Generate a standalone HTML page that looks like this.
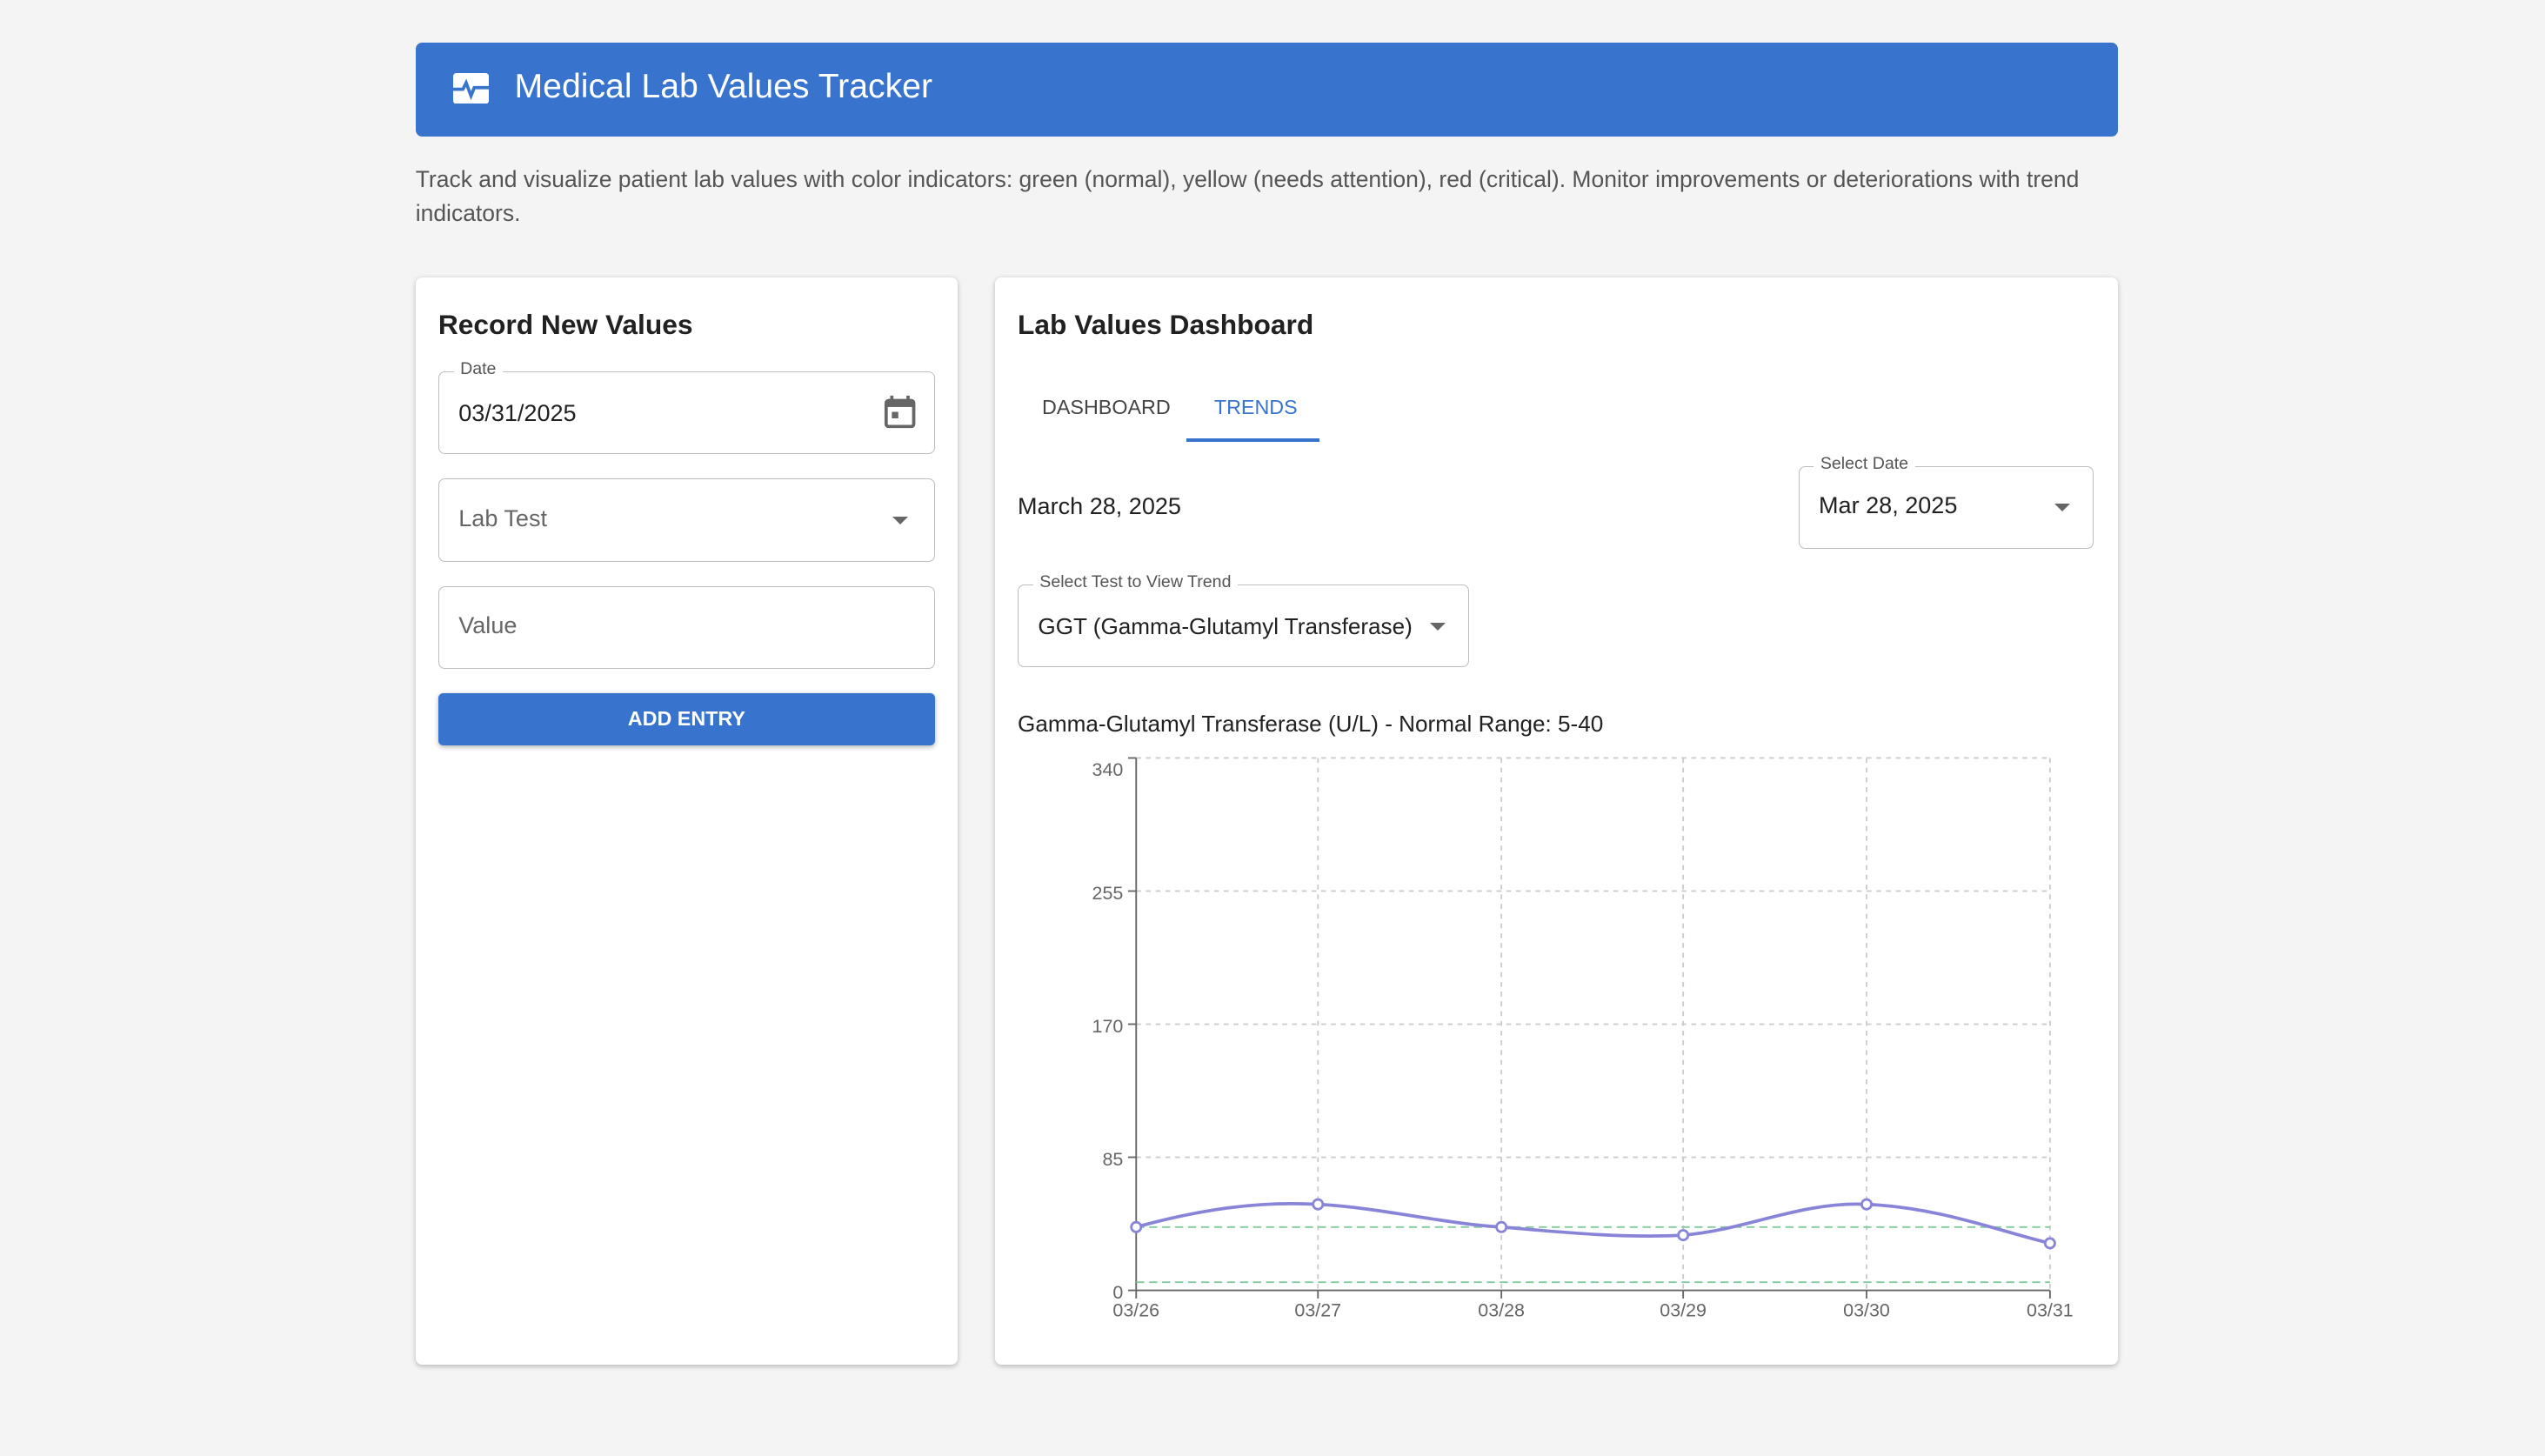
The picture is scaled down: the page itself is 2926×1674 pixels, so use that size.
<!DOCTYPE html>
<html><head><meta charset="utf-8"><style>
html{zoom:1.8661}
body{margin:0;width:1568px;height:897px;background:#f4f4f4;font-family:"Liberation Sans",Roboto,sans-serif;position:relative;overflow:hidden;color:#212121}
.abs{position:absolute}
.hdr{left:256px;top:26px;width:1049px;height:58px;background:#3874cd;border-radius:4px;color:#fff}
.hdr span{position:absolute;left:61px;top:16px;font-size:21px}
.desc{left:256px;top:100px;width:1040px;font-size:14.2px;line-height:21px;color:#555}
.card{background:#fff;border-radius:4px;box-shadow:0 1px 3px rgba(0,0,0,.25)}
.fld{position:absolute;border:1px solid #bdbdbd;border-radius:4px;font-size:14.5px;box-sizing:border-box}
.lbl{position:absolute;top:-8px;left:9px;background:#fff;padding:0 4px;font-size:10.5px;color:#555}
.h{font-size:17px;font-weight:bold;position:absolute}
.tri{position:absolute;width:0;height:0;border-left:5px solid transparent;border-right:5px solid transparent;border-top:5px solid #666}
</style></head><body>
<div class="abs hdr"><svg class="abs" style="left:23px;top:19px" width="22" height="19" viewBox="0 0 22 19"><rect x="0" y="0" width="22" height="19" rx="2" fill="#fff"/><path d="M0 10h6l2-4 3 8 2-5h9" stroke="#3874cd" stroke-width="2" fill="none"/></svg><span>Medical Lab Values Tracker</span></div>
<div class="abs desc">Track and visualize patient lab values with color indicators: green (normal), yellow (needs attention), red (critical). Monitor improvements or deteriorations with trend indicators.</div>

<div class="abs card" style="left:256px;top:171px;width:334px;height:670px">
<div class="h" style="left:14px;top:19px">Record New Values</div>
<div class="fld" style="left:14px;top:58px;width:306px;height:51px"><div class="lbl">Date</div><div style="position:absolute;left:12px;top:17px">03/31/2025</div>
<svg style="position:absolute;right:11px;top:13px" width="20" height="22" viewBox="0 0 20 22"><rect x="1.5" y="4" width="17" height="16" rx="1.5" fill="none" stroke="#666" stroke-width="2"/><rect x="1.5" y="4" width="17" height="4" fill="#666"/><rect x="4" y="1" width="2" height="4" fill="#666"/><rect x="14" y="1" width="2" height="4" fill="#666"/><rect x="5" y="11" width="4" height="4" fill="#666"/></svg></div>
<div class="fld" style="left:14px;top:124px;width:306px;height:51px"><div style="position:absolute;left:12px;top:16px;color:#666">Lab Test</div><div class="tri" style="right:16px;top:23px"></div></div>
<div class="fld" style="left:14px;top:190px;width:306px;height:51px"><div style="position:absolute;left:12px;top:16px;color:#666">Value</div></div>
<div style="position:absolute;left:14px;top:256px;width:306px;height:32px;background:#3874cd;border-radius:3px;color:#fff;font-size:12.5px;font-weight:bold;text-align:center;line-height:32px;box-shadow:0 1px 3px rgba(0,0,0,.3)">ADD ENTRY</div>
</div>

<div class="abs card" style="left:613px;top:171px;width:692px;height:670px">
<div class="h" style="left:14px;top:19px">Lab Values Dashboard</div>
<div style="position:absolute;left:29px;top:73px;font-size:12.5px;color:#444">DASHBOARD</div>
<div style="position:absolute;left:135px;top:73px;font-size:12.5px;color:#3874cd">TRENDS</div>
<div style="position:absolute;left:118px;top:99px;width:82px;height:2px;background:#3874cd"></div>
<div style="position:absolute;left:14px;top:133px;font-size:14.5px">March 28, 2025</div>
<div class="fld" style="left:495px;top:116px;width:182px;height:51px"><div class="lbl">Select Date</div><div style="position:absolute;left:12px;top:16px">Mar 28, 2025</div><div class="tri" style="right:14px;top:23px"></div></div>
<div class="fld" style="left:14px;top:189px;width:278px;height:51px"><div class="lbl">Select Test to View Trend</div><div style="position:absolute;left:12px;top:17px;font-size:14px">GGT (Gamma-Glutamyl Transferase)</div><div class="tri" style="right:14px;top:23px"></div></div>
<div style="position:absolute;left:14px;top:267px;font-size:14px">Gamma-Glutamyl Transferase (U/L) - Normal Range: 5-40</div>
</div>

<svg class="abs" style="left:0;top:0" width="1568" height="897" font-family="Liberation Sans,sans-serif" font-size="11.5" fill="#666">
<g stroke="#ccc" stroke-dasharray="3 3">
<line x1="700" y1="467" x2="1263" y2="467"/><line x1="700" y1="549" x2="1263" y2="549"/><line x1="700" y1="631" x2="1263" y2="631"/><line x1="700" y1="713" x2="1263" y2="713"/>
<line x1="812" y1="467" x2="812" y2="795"/><line x1="925" y1="467" x2="925" y2="795"/><line x1="1037" y1="467" x2="1037" y2="795"/><line x1="1150" y1="467" x2="1150" y2="795"/><line x1="1263" y1="467" x2="1263" y2="795"/>
</g>
<g stroke="#666"><line x1="700" y1="467" x2="700" y2="795"/><line x1="700" y1="795" x2="1263" y2="795"/>
<line x1="695" y1="467" x2="700" y2="467"/><line x1="695" y1="549" x2="700" y2="549"/><line x1="695" y1="631" x2="700" y2="631"/><line x1="695" y1="713" x2="700" y2="713"/><line x1="695" y1="795" x2="700" y2="795"/>
<line x1="700" y1="795" x2="700" y2="800"/><line x1="812" y1="795" x2="812" y2="800"/><line x1="925" y1="795" x2="925" y2="800"/><line x1="1037" y1="795" x2="1037" y2="800"/><line x1="1150" y1="795" x2="1150" y2="800"/><line x1="1263" y1="795" x2="1263" y2="800"/></g>
<g text-anchor="end"><text x="692" y="478">340</text><text x="692" y="554">255</text><text x="692" y="636">170</text><text x="692" y="718">85</text><text x="692" y="800">0</text></g>
<g text-anchor="middle"><text x="700" y="811">03/26</text><text x="812" y="811">03/27</text><text x="925" y="811">03/28</text><text x="1037" y="811">03/29</text><text x="1150" y="811">03/30</text><text x="1263" y="811">03/31</text></g>
<g stroke="#82ca9d" stroke-dasharray="5 3" fill="none"><line x1="700" y1="756" x2="1263" y2="756"/><line x1="700" y1="790" x2="1263" y2="790"/></g>
<path d="M700 756C740 745 775 740 812 742C850 744 890 754 925 756C960 759 1000 763 1037 761C1075 758 1110 740 1150 742C1195 744 1230 758 1263 766" stroke="#8884d8" stroke-width="2" fill="none"/>
<g stroke="#8884d8" fill="#fff" stroke-width="1.5"><circle cx="700" cy="756" r="3"/><circle cx="812" cy="742" r="3"/><circle cx="925" cy="756" r="3"/><circle cx="1037" cy="761" r="3"/><circle cx="1150" cy="742" r="3"/><circle cx="1263" cy="766" r="3"/></g>
</svg>
</body></html>
